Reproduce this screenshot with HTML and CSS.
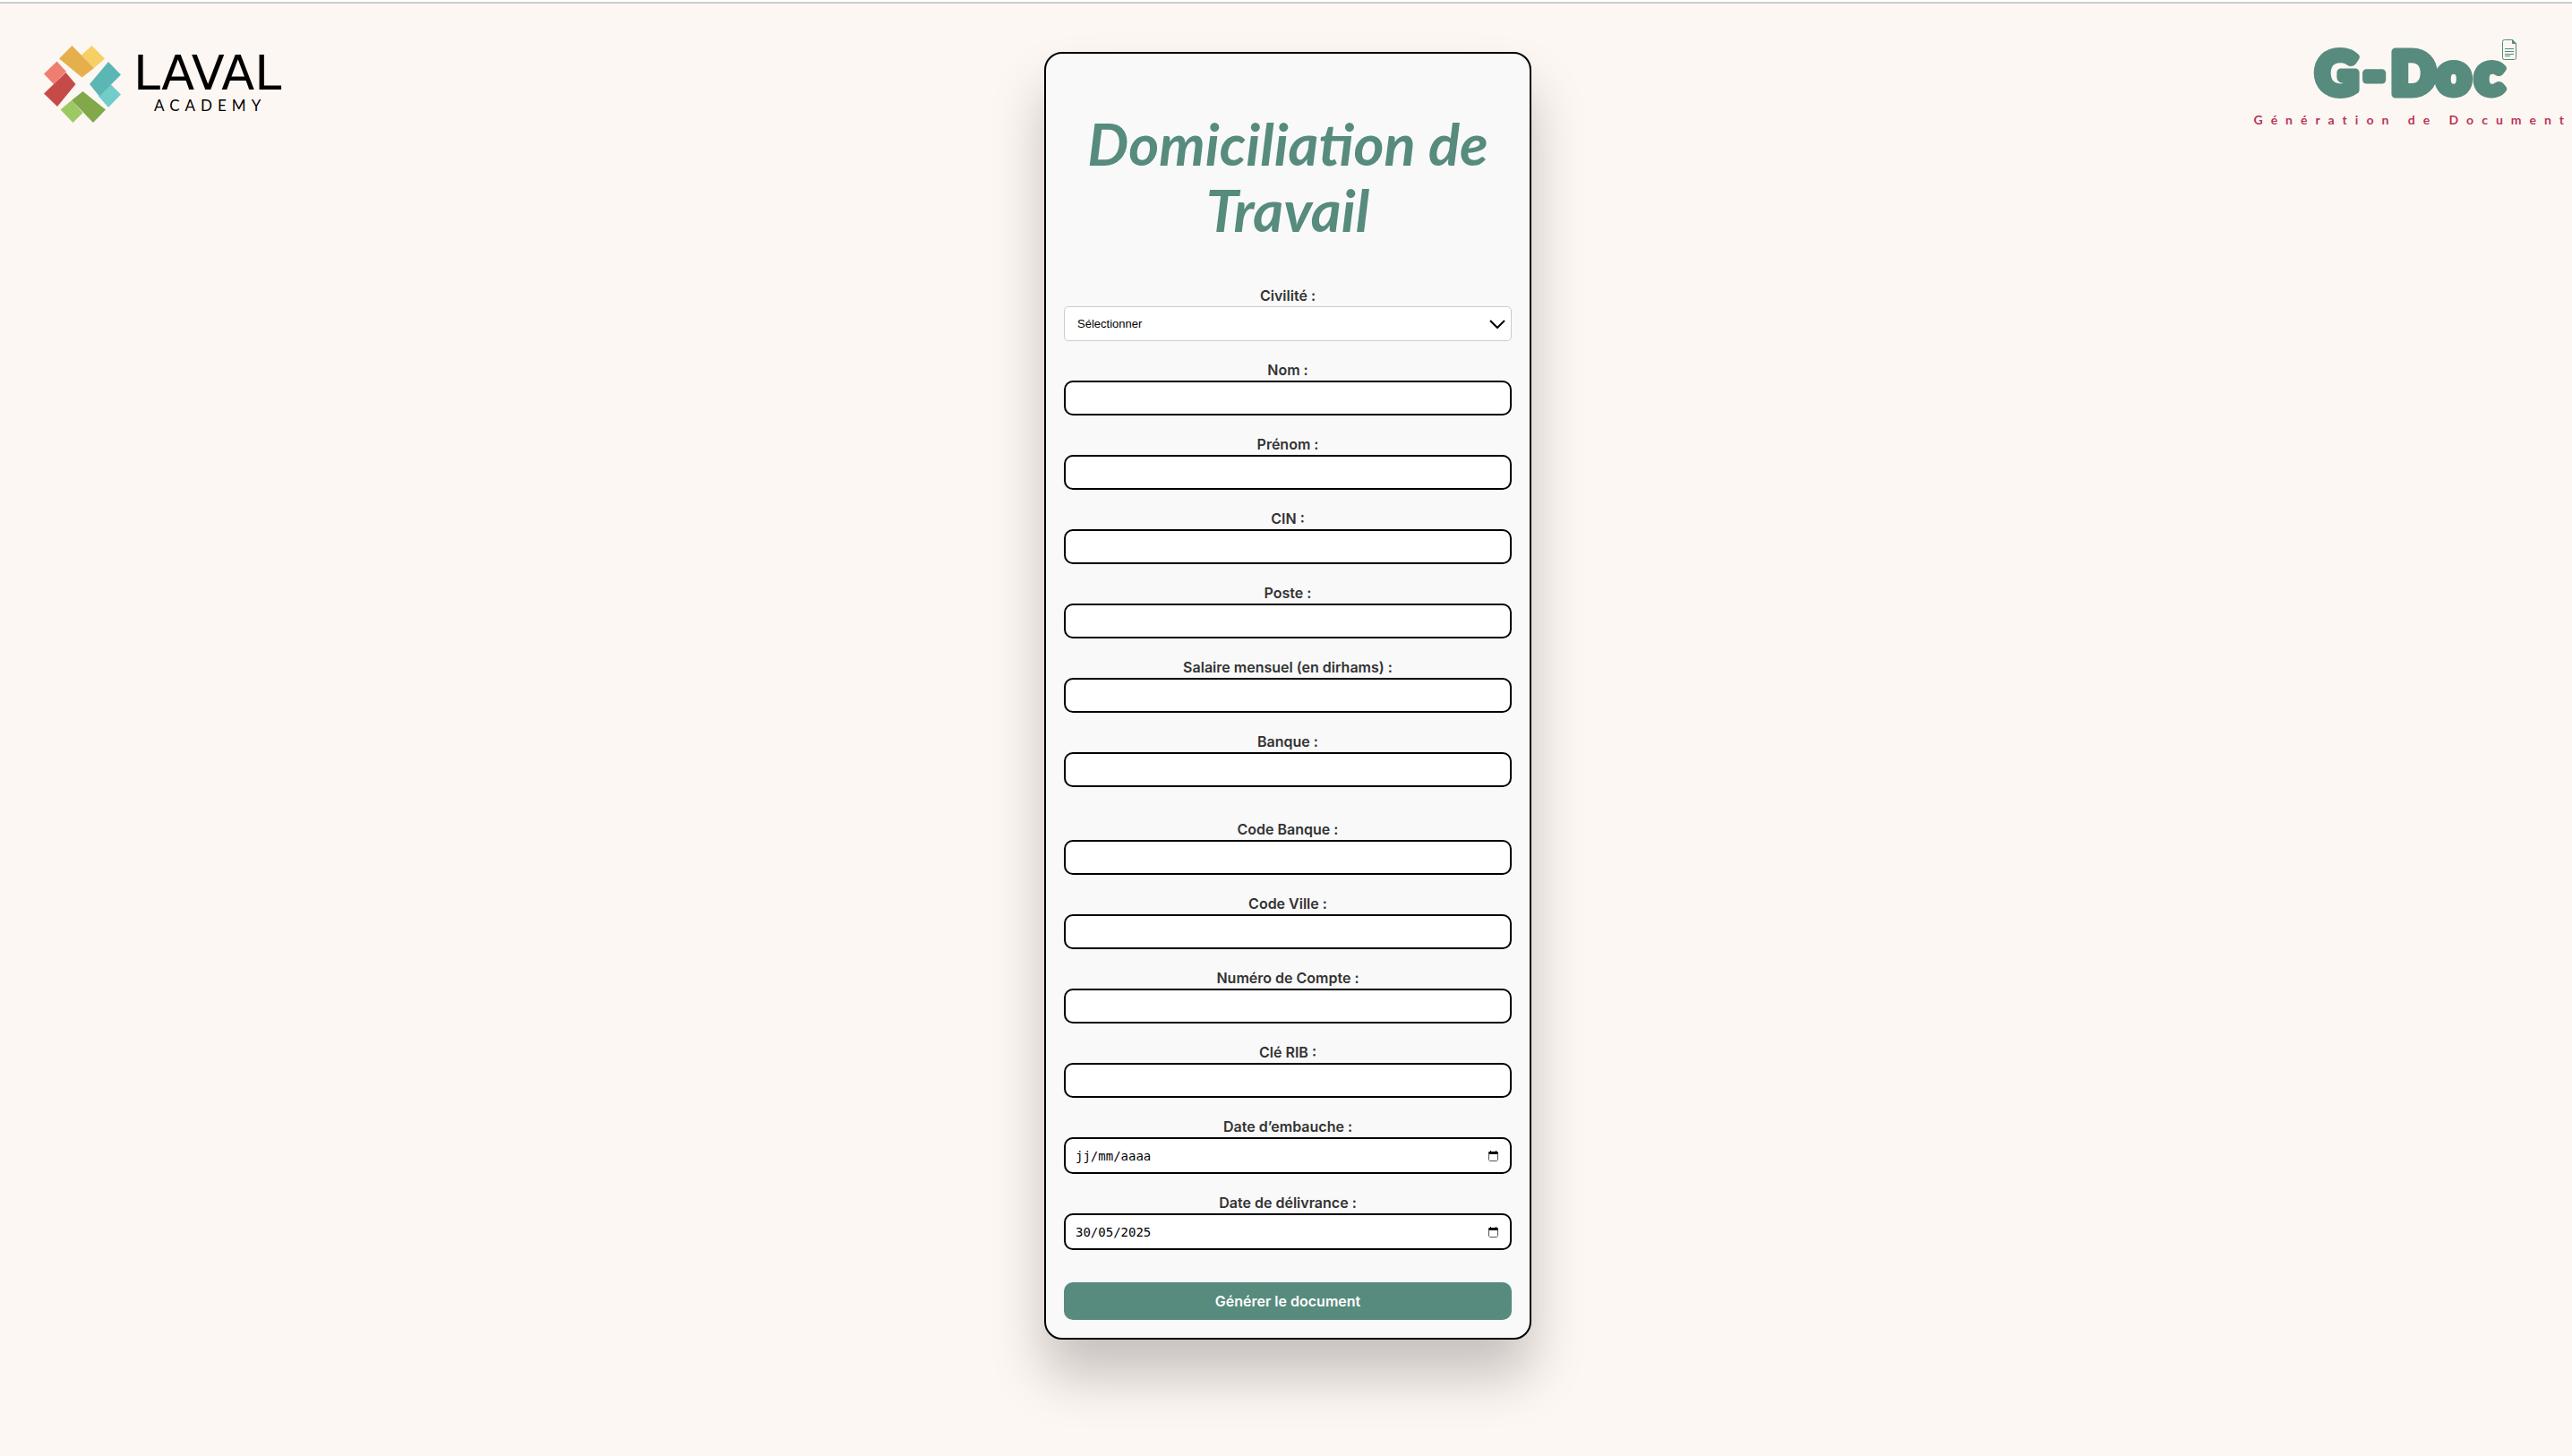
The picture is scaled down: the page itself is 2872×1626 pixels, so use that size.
FILE: index.html
```html
<!DOCTYPE html>
<html lang="fr">
<head>
<meta charset="utf-8">
<meta name="viewport" content="width=device-width, initial-scale=1">
<title>Domiciliation de Travail</title>
<link rel="stylesheet" href="styles.css">
</head>
<body>
<header class="brand brand-left">
  <svg class="brand-mark" viewBox="0 0 86 86" aria-hidden="true">
    <path fill="#f6d065" d="M53.500 0 68 14.500 56 25 42 10.500z"/>
    <path fill="#e5b04c" d="M31.500 0 56 25 42.500 35.500 17 14.500z"/>
    <path fill="#ee7f70" d="M14.500 17.500 25 29 11 43 0 31.500z"/>
    <path fill="#c64b48" d="M24.500 30 35.500 43 15 68 0 53.500z"/>
    <path fill="#72cdc8" d="M74.500 43 86 54.500 72 69 61 56.500z"/>
    <path fill="#5cb6b4" d="M72 18 86 32.500 62 56.500 51 43z"/>
    <path fill="#9dc963" d="M31 61 43.500 75 32.500 86 18.500 71.500z"/>
    <path fill="#82a84a" d="M43.500 51 69 71.500 55 86 31 61z"/>
  </svg>
  <div class="brand-words">
    <span class="brand-name">LAVAL</span>
    <span class="brand-sub">ACADEMY</span>
  </div>
</header>
<main class="page">
  <form class="card">
    <h1 class="title">Domiciliation de Travail</h1>
    <div class="field">
      <label for="civilite">Civilité :</label>
      <div class="control">
        <select id="civilite" class="select"><option>Sélectionner</option><option>Monsieur</option><option>Madame</option></select>
        <svg class="chevron" viewBox="0 0 18 10" aria-hidden="true"><path d="M1 1l8 8 8-8"/></svg>
      </div>
    </div>
    <div class="field"><label for="nom">Nom :</label><input id="nom" class="input" type="text"></div>
    <div class="field"><label for="prenom">Prénom :</label><input id="prenom" class="input" type="text"></div>
    <div class="field"><label for="cin">CIN :</label><input id="cin" class="input" type="text"></div>
    <div class="field"><label for="poste">Poste :</label><input id="poste" class="input" type="text"></div>
    <div class="field"><label for="salaire">Salaire mensuel (en dirhams) :</label><input id="salaire" class="input" type="text"></div>
    <div class="field"><label for="banque">Banque :</label><input id="banque" class="input" type="text"></div>
    <fieldset class="group">
      <div class="field"><label for="codeb">Code Banque :</label><input id="codeb" class="input" type="text"></div>
      <div class="field"><label for="codev">Code Ville :</label><input id="codev" class="input" type="text"></div>
      <div class="field"><label for="compte">Numéro de Compte :</label><input id="compte" class="input" type="text"></div>
      <div class="field"><label for="rib">Clé RIB :</label><input id="rib" class="input" type="text"></div>
    </fieldset>
    <div class="field">
      <label for="embauche">Date d’embauche :</label>
      <div class="control">
        <input id="embauche" class="input input-date" type="text" placeholder="jj/mm/aaaa">
        <svg class="calendar" viewBox="0 0 11 12" aria-hidden="true"><path d="M1 1h1V0h1v1h5V0h1v1h1l1 1v2H0V2z"/><path class="calendar-box" d="M.5 3v7.500l1 1h8l1-1V3"/></svg>
      </div>
    </div>
    <div class="field">
      <label for="delivrance">Date de délivrance :</label>
      <div class="control">
        <input id="delivrance" class="input input-date" type="text" value="30/05/2025">
        <svg class="calendar" viewBox="0 0 11 12" aria-hidden="true"><path d="M1 1h1V0h1v1h5V0h1v1h1l1 1v2H0V2z"/><path class="calendar-box" d="M.5 3v7.500l1 1h8l1-1V3"/></svg>
      </div>
    </div>
    <button class="submit" type="submit">Générer le document</button>
  </form>
</main>
<aside class="brand brand-right">
  <svg class="gdoc" viewBox="0 0 228 72" role="img" aria-label="G-Doc">
    <text class="gdoc-text" x="3 56 87 138 181" y="63">G-Doc</text>
    <g fill="none" stroke="#568b7d">
      <path d="M213.500 2.500h9l4 4v16q0 2-2 2h-11q-2 0-2-2v-18q0-2 2-2z"/>
      <path d="M214 12.500h10M214 15.500h10M214 18.500h10M214 20.500h6"/>
      <path fill="#568b7d" d="M222.500 2.500v4h4z"/>
    </g>
  </svg>
  <span class="tagline">Génération de Document</span>
</aside>
</body>
</html>
```
FILE: styles.css
```css
* { box-sizing: border-box; }

body {
  margin: 0;
  min-height: 100vh;
  border-top: 2px solid #fff;
  background: #fdf7f3;
  box-shadow: inset 0 2px #cbcfcb;
  color: #333;
  font-family: Inter, "Liberation Sans", sans-serif;
  display: grid;
  grid-template-columns: 1fr 548px 1fr;
  align-items: start;
}

.brand-left {
  display: flex;
  align-items: flex-start;
  gap: 14px;
  padding: 49px 0 0 49px;
}

.brand-mark { width: 86px; height: 86px; }

.brand-words {
  display: flex;
  flex-direction: column;
  align-items: center;
  padding-top: 1px;
  color: #000;
  font-family: "DejaVu Sans", sans-serif;
}

.brand-name { font-size: 54px; line-height: 60px; }

.brand-sub {
  padding-left: 6px;
  font-family: Lato, sans-serif;
  font-size: 17px;
  line-height: 12px;
  letter-spacing: 6px;
}

.page { padding: 56px 0 64px 4px; }

.card {
  padding: 20px;
  border: 2px solid #000;
  border-radius: 20px;
  background: #f9f9f9;
  box-shadow: 0 40px 60px rgba(0, 0, 0, .22);
}

.title {
  margin: 43px 0 49px;
  color: #568b7d;
  font-family: Lato, sans-serif;
  font-style: italic;
  font-weight: 700;
  font-size: 65px;
  line-height: 74px;
  text-align: center;
}

.field {
  display: flex;
  flex-direction: column;
  gap: 2px;
  margin-bottom: 22px;
}

.field label {
  font-size: 16px;
  font-weight: 600;
  line-height: 20px;
  text-align: center;
}

.control { position: relative; display: flex; }

.input,
.select {
  width: 100%;
  height: 39px;
  background: #fff;
  color: #000;
}

.input {
  padding: 10px;
  border: 2px solid #000;
  border-radius: 10px;
}

.input-date {
  height: 41px;
  padding: 10px 11px;
  font-family: "DejaVu Sans Mono", monospace;
  font-size: 14px;
}

.input-date::placeholder { color: #000; opacity: 1; }

.select {
  appearance: none;
  padding: 0 14px;
  border: 1px solid #ccc;
  border-radius: 5px;
  font-family: "Liberation Sans", Arial, sans-serif;
  font-size: 13px;
}

.chevron,
.calendar {
  position: absolute;
  top: 0;
  bottom: 0;
  margin: auto 0;
  pointer-events: none;
}

.chevron {
  right: 7px;
  width: 18px;
  height: 10px;
  fill: none;
  stroke: #000;
  stroke-width: 2;
}

.calendar { right: 15px; width: 11px; height: 12px; }

.calendar-box { fill: none; stroke: #555; }

.group {
  margin: 0;
  padding: 15px 0 0;
  border: 0;
  min-width: 0;
}

.submit {
  width: 100%;
  height: 42px;
  margin-top: 14px;
  border: 0;
  border-radius: 10px;
  background: #568b7d;
  color: #fff;
  font-family: inherit;
  font-size: 16px;
  font-weight: 600;
}

.brand-right {
  display: flex;
  flex-direction: column;
  align-items: flex-end;
  padding-top: 40px;
}

.gdoc { width: 228px; height: 72px; margin-right: 61px; overflow: visible; }

.gdoc-text {
  font-family: Lato, sans-serif;
  font-size: 65px;
  font-weight: 900;
  fill: #568b7d;
  stroke: #568b7d;
  stroke-width: 9px;
  stroke-linejoin: round;
}

.tagline {
  color: #b8355b;
  font-family: Lato, sans-serif;
  font-size: 14px;
  font-weight: 700;
  line-height: 40px;
  letter-spacing: 9px;
  white-space: nowrap;
}
```
